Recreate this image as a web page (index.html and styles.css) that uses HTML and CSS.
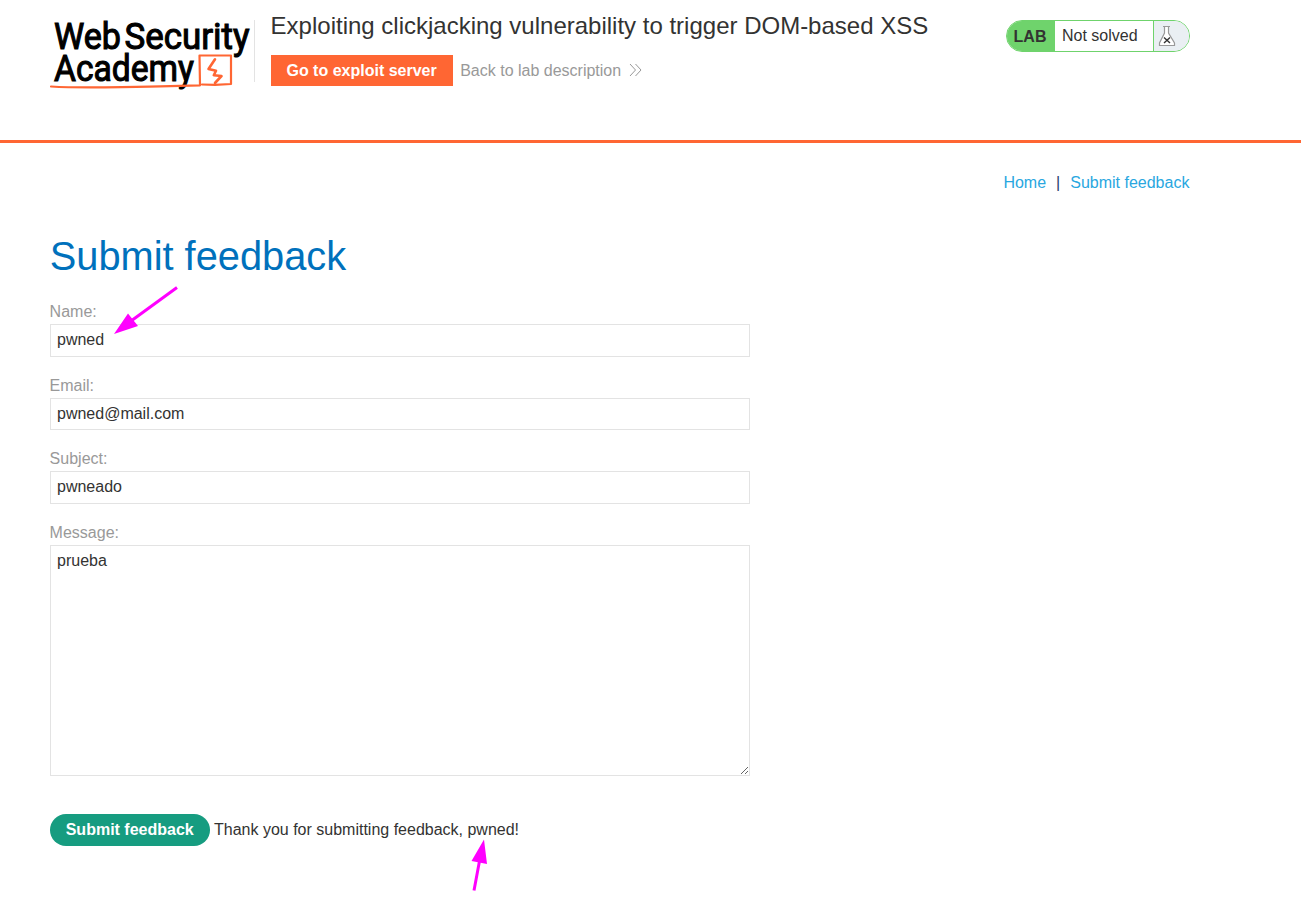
FILE: index.html
```html
<!DOCTYPE html>
<html lang="en">
<head>
<meta charset="utf-8">
<title>Exploiting clickjacking vulnerability to trigger DOM-based XSS</title>
<link rel="stylesheet" href="styles.css">
</head>
<body>
<header class="lab-header">
  <svg class="logo" width="204" height="74" viewBox="0 0 204 74" role="img" aria-label="Web Security Academy">
    <g class="logo-text">
      <text x="4" y="32.500" textLength="67" lengthAdjust="spacingAndGlyphs">Web</text>
      <text x="74.500" y="32.500" textLength="125" lengthAdjust="spacingAndGlyphs">Security</text>
      <text x="4" y="64.600" textLength="140" lengthAdjust="spacingAndGlyphs">Academy</text>
    </g>
    <g class="logo-line">
      <path d="M1 70.500Q20 71.600 55 71.300T110 70.300L150 69.300L149.500 39.500L181 39.500L181 68L165 68.800L152 68.500"/>
      <path class="bolt" d="M165 43.300L158.500 53L166 54.700L163.800 59.200L171.500 60L165 67"/>
    </g>
  </svg>
  <div class="title">
    <h2>Exploiting clickjacking vulnerability to trigger DOM-based XSS</h2>
    <div class="actions">
      <a class="exploit">Go to exploit server</a>
      <a class="back"><span>Back to lab description</span>
        <svg width="13" height="14" viewBox="0 0 13 14"><path d="M1 1L6.500 7L1 13M6.500 1L12 7L6.500 13"/></svg>
      </a>
    </div>
  </div>
  <div class="status">
    <span class="status-label">LAB</span>
    <span class="status-text">Not solved</span>
    <span class="status-icon">
      <svg width="18" height="22" viewBox="0 0 18 22">
        <path class="flask" d="M5 1.500H12M6.500 1.500V8L1.500 18V20.500H16.500V18L10.500 8V1.500"/>
        <path class="cross" d="M6 12.500L12 18M12 12.500L6 18"/>
      </svg>
    </span>
  </div>
</header>
<main>
  <nav><a>Home</a><span>|</span><a>Submit feedback</a></nav>
  <h1>Submit feedback</h1>
  <form>
    <div class="field"><label for="name">Name:</label><input id="name" value="pwned"></div>
    <div class="field"><label for="email">Email:</label><input id="email" value="pwned@mail.com"></div>
    <div class="field"><label for="subject">Subject:</label><input id="subject" value="pwneado"></div>
    <div class="field"><label for="message">Message:</label><textarea id="message" spellcheck="false">prueba</textarea></div>
    <div class="submit-row"><button type="button">Submit feedback</button><span>Thank you for submitting feedback, pwned!</span></div>
  </form>
</main>
<svg class="annotations" width="1301" height="914" viewBox="0 0 1301 914">
  <path class="shaft" d="M177 287.500L131 321M474 890.500L479.500 861"/>
  <path class="head" d="M114 334L128 313.500L138 326ZM484 839.500L471.500 861L487 864Z"/>
</svg>
</body>
</html>
```
FILE: styles.css
```css
* { box-sizing: border-box; }
body {
  position: relative;
  margin: 0;
  height: 914px;
  overflow: hidden;
  background: #fff;
  color: #333332;
  font: 16px/18.4px "Liberation Sans", Arial, sans-serif;
}
.lab-header {
  display: flex;
  align-items: flex-start;
  height: 143px;
  padding: 0 111px 0 50px;
  border-bottom: 3px solid #ff6633;
}
.logo { margin-top: 16px; flex: none; overflow: visible; }
.logo-text { font: 400 37px Roboto, sans-serif; fill: #000; stroke: #000; stroke-width: 1.1; }
.logo-line { fill: none; stroke: #ff6633; stroke-width: 2.2; stroke-linejoin: round; stroke-linecap: round; }
.bolt { stroke-width: 2.6; }
.title {
  height: 62px;
  margin-top: 20px;
  padding-left: 15.6px;
  border-left: 1px solid #e3e3e3;
}
h2 {
  margin: -8px 0 0;
  font-size: 24px;
  line-height: 28px;
  font-weight: 400;
  white-space: nowrap;
}
.actions { display: flex; align-items: center; gap: 7.6px; margin-top: 15px; }
.exploit {
  width: 182px;
  height: 31px;
  background: #ff6633;
  color: #fff;
  font-weight: 700;
  line-height: 31px;
  text-align: center;
}
.back { display: flex; align-items: center; gap: 8px; color: #999; line-height: 20px; }
.back span { padding-top: 1px; }
.back svg { fill: none; stroke: #999; stroke-width: 1; margin-bottom: 1px; }
.status {
  display: flex;
  width: 184px;
  height: 32px;
  margin: 20px 0 0 auto;
  overflow: hidden;
  border: 1px solid #6fd36c;
  border-radius: 16px;
  line-height: 30px;
}
.status-label { width: 48px; padding: 1px 0 0 6.6px; background: #6fd36c; font-weight: 700; }
.status-text { flex: 1; padding-left: 7px; }
.status-icon { width: 36px; padding: 4px; border-left: 1px solid #6fd36c; background: #eaeff3; }
.status-icon svg { display: block; fill: none; }
.flask { fill: #fff; stroke: #999; stroke-width: 1.2; }
.cross { stroke: #333; stroke-width: 1.4; }
main { padding: 31px 111px 0 50px; }
nav { display: flex; justify-content: flex-end; gap: 10px; color: #29396b; padding-right: .6px; }
nav a { color: #29a7df; }
h1 {
  margin: 41px 0 22.6px -.3px;
  color: #0071bc;
  font-size: 39.8px;
  line-height: 46px;
  font-weight: 400;
}
form { width: 700px; }
.field { padding-bottom: 19px; }
label {
  display: block;
  height: 22px;
  margin-left: -.4px;
  padding-top: 1.2px;
  color: #999;
}
input, textarea {
  display: block;
  width: 100%;
  height: 32.6px;
  padding: 6px;
  border: 1px solid #e3e3e3;
  border-radius: 0;
  background: #fff;
  color: #333332;
  font: inherit;
}
textarea { height: 231px; }
.submit-row { display: flex; align-items: center; gap: 4px; padding-top: 19.2px; }
button {
  width: 160px;
  height: 32px;
  padding: 0 .6px 0 0;
  border: 0;
  border-radius: 16px;
  background: #169c80;
  color: #fff;
  font: inherit;
  font-weight: 700;
}
.annotations { position: absolute; top: 0; left: 0; pointer-events: none; }
.shaft { fill: none; stroke: #f0f; stroke-width: 3; }
.head { fill: #f0f; }
```
